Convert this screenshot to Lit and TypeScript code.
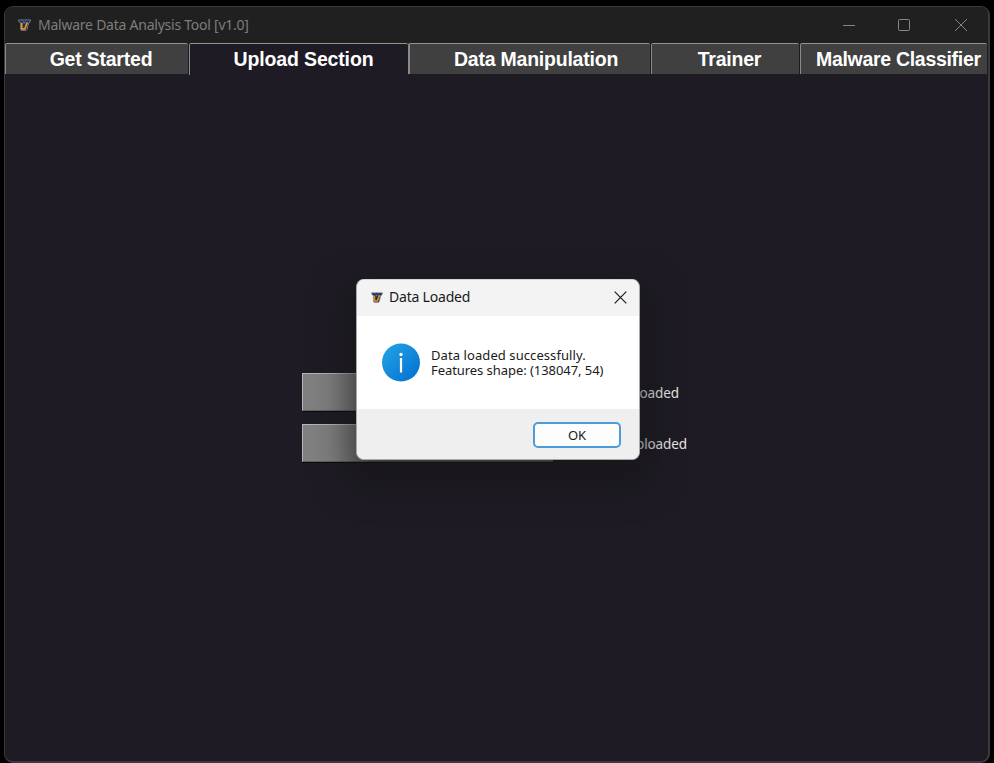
import { LitElement, html, css, svg } from "lit";
import { customElement } from "lit/decorators.js";

const logo = svg`
  <path d="M0.5 1H13.6L12.8 3.6L11.6 4L9.8 11L8.6 12.4H3.6L2.8 11V4L1.2 3.4Z" fill="#1b2f50" stroke="#8296aa" stroke-width=".8"/>
  <path d="M4 4V10.6H7.4L10 3.6" fill="none" stroke="#f08e26" stroke-width="1.9"/>
  <path d="M5.4 1.6L6.6 5L8.2 1.6" fill="#101c33" stroke="#a9b6c2" stroke-width=".5"/>`;

@customElement("app-root")
export class AppRoot extends LitElement {
  static styles = css`
    :host {
      display: block;
      position: relative;
      width: 994px;
      height: 763px;
      background: #000;
      overflow: hidden;
      font-family: "Noto Sans", sans-serif;
    }
    * { box-sizing: border-box; }
    .pad { padding: 6px 4px 0 4px; height: 763px; }
    .window {
      height: 757px;
      border: 1px solid #3a3a3c;
      border-bottom-width: 2px;
      border-right-width: 2px;
      border-radius: 9px;
      background: #1e1b24;
      overflow: hidden;
      display: flex;
      flex-direction: column;
    }
    .titlebar {
      flex: none;
      height: 36px;
      background: #202020;
      display: flex;
      align-items: center;
      padding: 0 0 1px 13px;
      color: #7d7d7d;
    }
    .logo { width: 13px; height: 12px; flex: none; }
    .title { flex: 1; margin-left: 7px; font-size: 14px; letter-spacing: -0.24px; white-space: nowrap; padding-bottom: 1px; }
    .controls { width: 127px; height: 14px; margin-right: 19px; }
    .tabs { flex: none; display: flex; height: 32px; font: bold 19.5px "Liberation Sans", sans-serif; letter-spacing: -0.22px; }
    .tab {
      flex: none;
      height: 31px;
      line-height: 30px;
      text-align: center;
      color: #fff;
      background: #404040;
      border-top: 1px solid #929292;
      border-left: 1px solid #8b8b8b;
      border-radius: 2px 2px 0 0;
      white-space: nowrap;
    }
    .start { width: 183px; padding-left: 8px; margin-right: 1px; }
    .upload { width: 219px; padding-left: 9px; height: 32px; background: #1e1b24; letter-spacing: -0.15px; }
    .data { width: 242px; padding-left: 12px; margin-right: 1px; border-left-width: 2px; }
    .trainer { width: 148px; padding-left: 8px; margin-right: 1px; }
    .malware { width: 187px; padding-left: 15px; text-align: left; letter-spacing: -0.3px; }
    .content { display: flex; flex-direction: column; gap: 13px; padding: 298px 0 0 297px; }
    .row { display: flex; align-items: center; height: 38px; }
    .pick {
      width: 252px;
      height: 38px;
      background: #808080;
      border: 1px solid;
      border-color: #b5b5b5 #151515 #606060 #b5b5b5;
      box-shadow: 0 1px 0 #0b0b0d;
    }
    .state { font-size: 13.5px; color: #e8e8e8; text-align: right; letter-spacing: -0.1px; padding-top: 2px; }
    .first { width: 125px; }
    .second { width: 133px; }
    .dialog {
      position: absolute;
      left: 356px;
      top: 279px;
      width: 284px;
      height: 181px;
      border: 1px solid #a8a8aa;
      border-top-color: #d5d5d5;
      border-radius: 8px;
      overflow: hidden;
      display: flex;
      flex-direction: column;
      background: #fff;
      color: #1a1a1a;
      box-shadow: 0 16px 34px 8px rgba(21, 21, 21, 0.65);
    }
    .head { height: 36px; flex: none; background: #f3f3f3; display: flex; align-items: center; padding: 0 12px 1px 14px; }
    .head .logo { width: 12px; height: 11px; }
    .head-title { flex: 1; margin-left: 6px; font-size: 14px; letter-spacing: -0.2px; padding-bottom: 2px; }
    .close { width: 13px; height: 13px; margin-bottom: 1px; }
    .body { height: 93px; flex: none; display: flex; align-items: center; padding-left: 25px; gap: 11px; }
    .info { width: 38px; height: 39px; }
    .message { font-size: 13px; line-height: 15.5px; white-space: nowrap; padding-top: 1px; }
    .line { display: block; letter-spacing: 0.08px; }
    .line + .line { letter-spacing: -0.06px; }
    .foot { flex: 1; background: #efefef; display: flex; justify-content: flex-end; padding: 13px 18px 0 0; }
    .ok {
      width: 88px;
      height: 26px;
      border: 2px solid #4c9bdb;
      border-radius: 5px;
      background: #fdfdfd;
      font-size: 13px;
      line-height: 23px;
      text-align: center;
    }
  `;

  render() {
    return html`
      <div class="pad">
        <div class="window">
          <div class="titlebar">
            <svg class="logo" viewBox="0 0 14 13">${logo}</svg>
            <span class="title">Malware Data Analysis Tool [v1.0]</span>
            <svg class="controls" viewBox="0 0 127 14" fill="none" stroke="#858585">
              <path d="M1 7.5H13" />
              <rect x="56.5" y="1.5" width="11" height="11" rx="1" />
              <path d="M113 1L125 13M125 1L113 13" />
            </svg>
          </div>
          <div class="tabs">
            <div class="tab start">Get Started</div>
            <div class="tab upload">Upload Section</div>
            <div class="tab data">Data Manipulation</div>
            <div class="tab trainer">Trainer</div>
            <div class="tab malware">Malware Classifier</div>
          </div>
          <div class="content">
            <div class="row"><div class="pick"></div><div class="state first">loaded</div></div>
            <div class="row"><div class="pick"></div><div class="state second">uploaded</div></div>
          </div>
        </div>
      </div>
      <div class="dialog">
        <div class="head">
          <svg class="logo" viewBox="0 0 14 13">${logo}</svg>
          <span class="head-title">Data Loaded</span>
          <svg class="close" viewBox="0 0 13 13" fill="none" stroke="#1a1a1a" stroke-width="1.2"><path d="M.7 .7L12.3 12.3M12.3 .7L.7 12.3" /></svg>
        </div>
        <div class="body">
          <svg class="info" viewBox="0 0 38 39">
            <defs>
              <linearGradient id="g" x1="0" y1="0" x2="1" y2="1">
                <stop offset="0.1" stop-color="#219fe3" />
                <stop offset="0.9" stop-color="#0574d2" />
              </linearGradient>
            </defs>
            <circle cx="19" cy="19.5" r="19" fill="url(#g)" />
            <circle cx="19" cy="11.5" r="1.7" fill="#fff" />
            <path d="M19 15V29.5" stroke="#fff" stroke-width="2.2" />
          </svg>
          <div class="message"><span class="line">Data loaded successfully.</span><span class="line">Features shape: (138047, 54)</span></div>
        </div>
        <div class="foot"><div class="ok">OK</div></div>
      </div>
    `;
  }
}
